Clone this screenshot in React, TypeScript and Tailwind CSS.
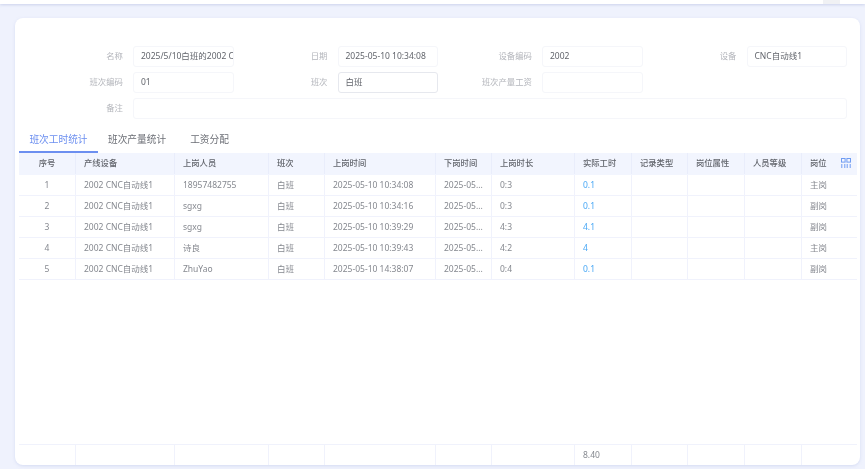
const font = "[font-family:'Noto_Sans','Noto_Sans_CJK_SC',sans-serif]";

const columns = [
  { title: "序号", width: "w-[57px]", center: true },
  { title: "产线设备", width: "w-[99px]" },
  { title: "上岗人员", width: "w-[94px]" },
  { title: "班次", width: "w-[56px]" },
  { title: "上岗时间", width: "w-[111px]" },
  { title: "下岗时间", width: "w-[56px]" },
  { title: "上岗时长", width: "w-[83px]" },
  { title: "实际工时", width: "w-[57px]" },
  { title: "记录类型", width: "w-[56px]" },
  { title: "岗位属性", width: "w-[57px]" },
  { title: "人员等级", width: "w-[57px]" },
  { title: "岗位", width: "w-[55px]" },
];

const rows = [
  ["1", "2002 CNC自动线1", "18957482755", "白班", "2025-05-10 10:34:08", "2025-05...", "0:3", "0.1", "", "", "", "主岗"],
  ["2", "2002 CNC自动线1", "sgxg", "白班", "2025-05-10 10:34:16", "2025-05...", "0:3", "0.1", "", "", "", "副岗"],
  ["3", "2002 CNC自动线1", "sgxg", "白班", "2025-05-10 10:39:29", "2025-05...", "4:3", "4.1", "", "", "", "副岗"],
  ["4", "2002 CNC自动线1", "诗良", "白班", "2025-05-10 10:39:43", "2025-05...", "4:2", "4", "", "", "", "主岗"],
  ["5", "2002 CNC自动线1", "ZhuYao", "白班", "2025-05-10 14:38:07", "2025-05...", "0:4", "0.1", "", "", "", "副岗"],
];

function Field({ label, value, active }: { label: string; value?: string; active?: boolean }) {
  return (
    <div className="flex items-center w-[204.5px]">
      <span className="w-[94px] text-right text-[8.4px] text-[#b4b6bc]">{label}</span>
      <div
        className={`ml-[10px] w-[100.5px] h-[21px] px-[7px] flex items-center overflow-hidden whitespace-nowrap rounded-[3px] border text-[8.5px] text-[#62656c] ${
          active ? "border-[#e6e8ee]" : "border-[#f5f6fa]"
        }`}
      >
        {value}
      </div>
    </div>
  );
}

export default function App() {
  return (
    <div className={`${font} w-[865px] h-[469px] overflow-hidden bg-[#eff2fd] flex flex-col blur-[0.35px]`}>
      <div className="h-[4px] bg-white shadow-[0_1px_3px_rgba(180,190,225,0.6)] flex justify-end">
        <div className="w-[17px] mr-[25px] bg-[#f0f1f4]" />
      </div>

      <div className="mt-[14px] ml-[15px] mr-[5px] h-[447px] bg-white rounded-[8px] shadow-[0_1px_3px_rgba(190,200,235,0.5)] px-[4px] flex flex-col">
        <div className="pt-[28px] pl-[10px] flex flex-col gap-[5px]">
          <div className="flex">
            <Field label="名称" value="2025/5/10白班的2002 C" />
            <Field label="日期" value="2025-05-10 10:34:08" />
            <Field label="设备编码" value="2002" />
            <Field label="设备" value="CNC自动线1" />
          </div>
          <div className="flex">
            <Field label="班次编码" value="01" />
            <Field label="班次" value="白班" active />
            <Field label="班次产量工资" />
          </div>
          <div className="flex items-center">
            <span className="w-[94px] text-right text-[8.4px] text-[#b4b6bc]">备注</span>
            <div className="ml-[10px] w-[714px] h-[21px] rounded-[3px] border border-[#f5f6fa]" />
          </div>
        </div>

        <div className="mt-[11px] h-[23px] flex text-[9.7px] text-[#6b6e75]">
          <div className="w-[79px] flex items-center justify-center text-[#6c8ff0] border-b-[2px] border-[#6c8ff0]">
            班次工时统计
          </div>
          <div className="ml-[10px] flex items-center h-[21px]">班次产量统计</div>
          <div className="ml-[24px] flex items-center h-[21px]">工资分配</div>
        </div>

        <div className="w-[838px] flex-1 flex flex-col">
          <div className="h-[22px] pb-[1px] flex bg-[#f2f5fe] text-[8.3px] font-medium text-[#62656c]">
            {columns.map((c, i) => (
              <div
                key={c.title}
                className={`${c.width} ${c.center ? "justify-center" : "pl-[8px]"} relative flex items-center border-r border-[#e9edfb] last:border-r-0`}
              >
                {c.title}
                {i === 11 && (
                  <svg className="absolute right-[6px] top-[5px]" width="10" height="10" viewBox="0 0 10 10" fill="none" stroke="#6f9cf2" strokeWidth="1">
                    <rect x="0.5" y="0.5" width="3.6" height="3.6" />
                    <rect x="5.9" y="0.5" width="3.6" height="3.6" />
                    <path d="M0.8 6v4M3.8 6v4M6.2 6v4M9.2 6v4" />
                  </svg>
                )}
              </div>
            ))}
          </div>

          {rows.map((row) => (
            <div key={row[0]} className="h-[21px] flex border-b border-[#f0f2fc] text-[8.5px] text-[#85888f]">
              {row.map((cell, i) => (
                <div
                  key={i}
                  className={`${columns[i].width} ${columns[i].center ? "justify-center" : "pl-[8px]"} flex items-center whitespace-nowrap overflow-hidden border-r border-[#f0f2fc] last:border-r-0 ${
                    i === 7 ? "text-[#4aa8f5]" : ""
                  }`}
                >
                  {cell}
                </div>
              ))}
            </div>
          ))}

          <div className="flex-1" />

          <div className="h-[21px] flex border-t border-[#f0f2fc] text-[8.5px] text-[#85888f]">
            {columns.map((c, i) => (
              <div key={c.title} className={`${c.width} pl-[8px] flex items-center border-r border-[#f0f2fc] last:border-r-0`}>
                {i === 7 ? "8.40" : ""}
              </div>
            ))}
          </div>
        </div>
      </div>
    </div>
  );
}
